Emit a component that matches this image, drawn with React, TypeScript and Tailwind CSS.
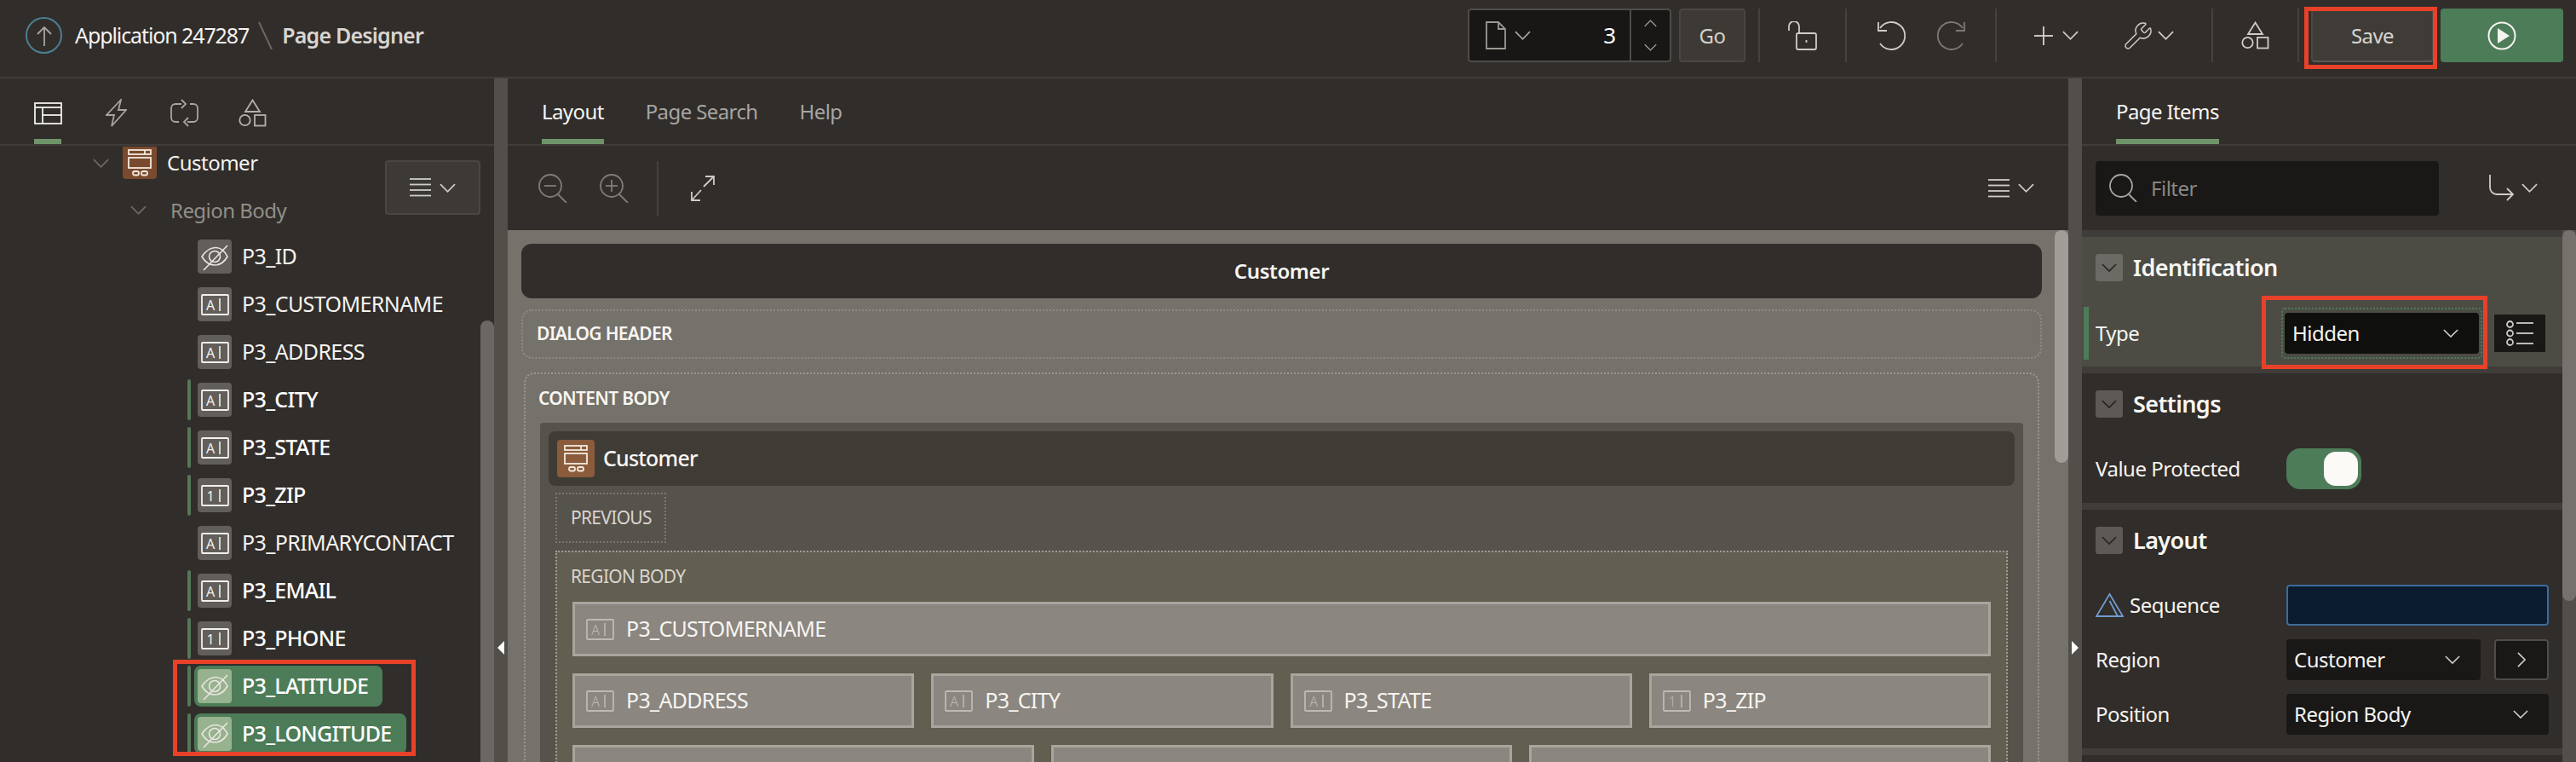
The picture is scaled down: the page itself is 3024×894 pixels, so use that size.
import { Wrench } from "lucide-react";

const font = { fontFamily: '"Noto Sans", "Open Sans", sans-serif' };

function Chev({ w = 19, h = 11, color = "#bdbab5", dir = "down", className = "" }: { w?: number; h?: number; color?: string; dir?: string; className?: string }) {
    const pts = dir === "down" ? "1,1 10,10 19,1" : dir === "up" ? "1,10 10,1 19,10" : "1,1 10,10 1,19";
    const vb = dir === "right" ? "0 0 11 20" : "0 0 20 11";
    return (
        <svg width={w} height={h} viewBox={vb} fill="none" className={className}>
            <polyline points={pts} stroke={color} strokeWidth="1.8" />
        </svg>
    );
}

function Shapes({ color = "#b5b2ad" }: { color?: string }) {
    return (
        <svg width="33" height="33" viewBox="0 0 33 33" fill="none" stroke={color} strokeWidth="1.8">
            <path d="M16.5 1.5 L25 15 H8 Z" />
            <circle cx="7.5" cy="25" r="6.2" />
            <rect x="19" y="19" width="12.5" height="12.5" />
        </svg>
    );
}

function EyeOff() {
    return (
        <svg width="40" height="40" viewBox="0 0 40 40" fill="none" stroke="#e9e6e1" strokeWidth="1.6">
            <path d="M5 20 C11 11 16 9.5 21 9.5 C26 9.5 31 12 35 20 C31 27 26 30 20 30 C14 30 9 27 5 20 Z" />
            <circle cx="20" cy="20" r="6.5" />
            <line x1="7" y1="36" x2="35" y2="7" />
        </svg>
    );
}

function FieldIcon({ ch, w = 33, h = 25, color = "#f2f0ec", thin = false }: { ch: string; w?: number; h?: number; color?: string; thin?: boolean }) {
    return (
        <svg width={w} height={h} viewBox="0 0 33 25" fill="none">
            <rect x="1" y="1" width="31" height="23" rx="1" stroke={color} strokeWidth="1.8" />
            <text x="11" y="18.5" textAnchor="middle" fontSize="16" fill={color} fontFamily="Noto Sans" fontWeight={thin ? 300 : 400}>{ch}</text>
            <line x1="22" y1="5" x2="22" y2="20" stroke={color} strokeWidth="1.6" />
        </svg>
    );
}

function RegionIcon({ size = "big" }: { size?: string }) {
    return (
        <div className={size === "big" ? "w-[40px] h-[38px] bg-[#7a4a2e] rounded-b-[4px] flex items-center justify-center shrink-0" : "w-[44px] h-[44px] bg-[#8a5c3c] rounded-[4px] flex items-center justify-center shrink-0"}>
            <svg width="30" height="32" viewBox="0 0 30 32" fill="none" stroke="#f3e9dd" strokeWidth="1.8">
                <rect x="2" y="1" width="26" height="5" />
                <line x1="21" y1="1" x2="21" y2="6" />
                <rect x="2" y="10" width="26" height="12" />
                <rect x="7" y="26" width="7" height="4.5" rx="2" />
                <rect x="17" y="26" width="7" height="4.5" rx="2" />
            </svg>
        </div>
    );
}

function MenuIcon({ color = "#cfccc7" }: { color?: string }) {
    return (
        <div className="flex items-center gap-[10px]">
            <svg width="25" height="22" viewBox="0 0 25 22" stroke={color} strokeWidth="1.8">
                <line x1="0" y1="1" x2="25" y2="1" />
                <line x1="0" y1="7.5" x2="25" y2="7.5" />
                <line x1="0" y1="14" x2="25" y2="14" />
                <line x1="0" y1="20.5" x2="25" y2="20.5" />
            </svg>
            <Chev color={color} />
        </div>
    );
}

function Divider() {
    return <div className="w-[2px] h-[63px] bg-[#45413e] shrink-0" />;
}

function TreeItem({ name, kind, changed, picked }: { name: string; kind: "eye" | "A" | "1"; changed?: boolean; picked?: boolean }) {
    return (
        <div className="flex items-center h-[56px] pl-[220px] shrink-0">
            <div className={changed ? "w-[4px] h-[48px] rounded-full bg-[#56765b]" : "w-[4px] h-[48px]"} />
            <div className={picked ? "ml-[4px] h-[48px] pl-[4px] pr-[17px] flex items-center bg-[#4d7c58] rounded-[8px]" : "ml-[4px] h-[48px] pl-[4px] flex items-center"}>
                <div className={picked ? "w-[40px] h-[40px] rounded-[4px] bg-[#97b28e] flex items-center justify-center" : "w-[40px] h-[40px] rounded-[4px] bg-[#625e5a] flex items-center justify-center"}>
                    {kind === "eye" ? <EyeOff /> : <FieldIcon ch={kind} />}
                </div>
                <span className={changed ? "ml-[12px] text-[25px] font-medium tracking-[-0.7px] text-white" : "ml-[12px] text-[25px] tracking-[-0.6px] text-[#f5f3ef]"}>{name}</span>
            </div>
        </div>
    );
}

function Tab({ label, active }: { label: string; active?: boolean }) {
    return (
        <div className={active ? "h-full flex items-center border-b-[6px] border-[#6f9469] pt-[6px] text-[#f7f5f1]" : "h-full flex items-center border-b-[6px] border-transparent pt-[6px] text-[#a8a5a0]"}>
            <span className="text-[24px] tracking-[-0.6px]">{label}</span>
        </div>
    );
}

function CanvasItem({ name, kind }: { name: string; kind?: string }) {
    return (
        <div className="h-[64px] bg-[#8b8680] border-[3px] border-[#a8a49e] flex items-center pl-[13px] gap-[14px]">
            {kind && <FieldIcon ch={kind} color="#bdb9b3" thin />}
            {kind && <span className="text-[25px] tracking-[-0.7px] text-[#f7f5f1]">{name}</span>}
        </div>
    );
}

function SectionHead({ title, light }: { title: string; light?: boolean }) {
    return (
        <div className="h-[32px] flex items-center gap-[12px] pl-[16px]">
            <div className={light ? "w-[32px] h-[32px] rounded-[3px] bg-[#6c6a65] flex items-center justify-center" : "w-[32px] h-[32px] rounded-[3px] bg-[#5d5a56] flex items-center justify-center"}>
                <Chev w={18} h={10} color="#26231f" />
            </div>
            <span className="text-[27px] font-semibold tracking-[-0.6px] text-[#f8f6f2]">{title}</span>
        </div>
    );
}

function Band() {
    return <div className="h-[8px] bg-[#403c39] shrink-0" />;
}

function SelectBox({ value, width, bg = "bg-[#191817]" }: { value: string; width: string; bg?: string }) {
    return (
        <div className={`${width} ${bg} h-[48px] rounded-[4px] flex items-center justify-between pl-[9px] pr-[24px]`}>
            <span className="text-[24px] tracking-[-0.5px] text-[#f5f3ef]">{value}</span>
            <Chev w={18} h={10} color="#cfccc7" />
        </div>
    );
}

export default function App() {
    const items: { name: string; kind: "eye" | "A" | "1"; changed?: boolean; picked?: boolean }[] = [
        { name: "P3_ID", kind: "eye" },
        { name: "P3_CUSTOMERNAME", kind: "A" },
        { name: "P3_ADDRESS", kind: "A" },
        { name: "P3_CITY", kind: "A", changed: true },
        { name: "P3_STATE", kind: "A", changed: true },
        { name: "P3_ZIP", kind: "1", changed: true },
        { name: "P3_PRIMARYCONTACT", kind: "A" },
        { name: "P3_EMAIL", kind: "A", changed: true },
        { name: "P3_PHONE", kind: "1", changed: true },
        { name: "P3_LATITUDE", kind: "eye", changed: true, picked: true },
        { name: "P3_LONGITUDE", kind: "eye", changed: true, picked: true },
    ];

    return (
        <div style={font} className="relative w-[3024px] h-[894px] overflow-hidden bg-[#312d2a] flex flex-col">
            {/* top bar */}
            <div className="h-[92px] shrink-0 border-b-2 border-[#403c39] flex items-start pt-[10px]">
                <div className="flex items-center h-[63px] pl-[30px] w-[1723px] shrink-0">
                    <div className="w-[43px] h-[43px] rounded-full border-2 border-[#4b7f90] flex items-center justify-center">
                        <svg width="18" height="24" viewBox="0 0 18 24" fill="none" stroke="#a9a6a1" strokeWidth="1.8">
                            <line x1="9" y1="2" x2="9" y2="24" />
                            <polyline points="1,10 9,2 17,10" />
                        </svg>
                    </div>
                    <span className="ml-[15px] text-[25px] tracking-[-1.1px] text-[#f5f3ef]">Application 247287</span>
                    <svg width="18" height="32" viewBox="0 0 18 32" className="ml-[11px]" stroke="#6b6763" strokeWidth="2">
                        <line x1="1" y1="0" x2="16" y2="32" />
                    </svg>
                    <span className="ml-[10px] text-[25px] font-semibold tracking-[-0.8px] text-[#d8d5d0]">Page Designer</span>
                </div>
                <div className="w-[239px] h-[63px] shrink-0 rounded-[4px] border-2 border-[#4f4b47] bg-[#181716] flex items-center">
                    <div className="flex-1 flex items-center pl-[18px]">
                        <svg width="25" height="33" viewBox="0 0 25 33" fill="none" stroke="#9c9994" strokeWidth="1.8">
                            <path d="M2 1 H16 L24 9 V32 H2 Z" />
                            <path d="M16 1 V9 H24" />
                        </svg>
                        <Chev className="ml-[10px]" color="#a8a5a0" />
                        <span className="ml-auto mr-[16px] text-[26px] text-white">3</span>
                    </div>
                    <div className="w-[47px] h-full border-l-2 border-[#4f4b47] flex flex-col items-center justify-center gap-[19px]">
                        <Chev w={15} h={9} dir="up" color="#a8a5a0" />
                        <Chev w={15} h={9} color="#a8a5a0" />
                    </div>
                </div>
                <div className="ml-[9px] w-[78px] h-[63px] shrink-0 rounded-[4px] border-2 border-[#4a4743] bg-[#3d3a36] flex items-center justify-center text-[24px] tracking-[-0.5px] text-[#d4d1cc]">Go</div>
                <div className="ml-[15px] flex items-center h-[63px]">
                    <Divider />
                    <svg width="34" height="34" viewBox="0 0 34 34" fill="none" stroke="#cfccc7" strokeWidth="1.8" className="ml-[33px]">
                        <path d="M1 11 V6 A6 6 0 0 1 13 6 V14" />
                        <rect x="10" y="14" width="23" height="19" rx="2" />
                        <line x1="21.5" y1="22" x2="21.5" y2="25" />
                    </svg>
                    <div className="ml-[33px]"><Divider /></div>
                    <svg width="34" height="34" viewBox="0 0 34 34" fill="none" stroke="#cfccc7" strokeWidth="1.8" className="ml-[35px]">
                        <path d="M4 8 A16 16 0 1 1 4 26" />
                        <polyline points="2,1 2,11 12,11" />
                    </svg>
                    <svg width="34" height="34" viewBox="0 0 34 34" fill="none" stroke="#7d7a75" strokeWidth="1.8" className="ml-[37px]">
                        <path d="M30 8 A16 16 0 1 0 30 26" />
                        <polyline points="32,1 32,11 22,11" />
                    </svg>
                    <div className="ml-[34px]"><Divider /></div>
                    <svg width="22" height="22" viewBox="0 0 22 22" stroke="#cfccc7" strokeWidth="1.9" className="ml-[44px]">
                        <line x1="11" y1="0" x2="11" y2="22" />
                        <line x1="0" y1="11" x2="22" y2="11" />
                    </svg>
                    <Chev className="ml-[11px]" color="#cfccc7" />
                    <Wrench size={36} strokeWidth={1} color="#cfccc7" className="ml-[52px]" />
                    <Chev className="ml-[5px]" color="#cfccc7" />
                    <div className="ml-[44px]"><Divider /></div>
                    <div className="ml-[33px]"><Shapes color="#cfccc7" /></div>
                    <div className="ml-[33px]"><Divider /></div>
                </div>
                <div className="ml-[14px] w-[144px] h-[62px] mt-[1px] shrink-0 rounded-[4px] bg-[#3f3c37] border-2 border-[#4c4945] border-b-[#5d5a55] flex items-center justify-center text-[24px] tracking-[-0.6px] text-[#d8d5d0]">Save</div>
                <div className="ml-[8px] w-[144px] h-[63px] shrink-0 rounded-[4px] bg-[#4d7c58] flex items-center justify-center">
                    <svg width="34" height="34" viewBox="0 0 34 34" fill="none">
                        <circle cx="17" cy="17" r="15.5" stroke="#f5f3ef" strokeWidth="2" />
                        <path d="M12 8 L26 17 L12 26 Z" fill="#f5f3ef" />
                    </svg>
                </div>
            </div>

            <div className="flex-1 flex min-h-0">
                {/* left panel */}
                <div className="w-[580px] shrink-0 flex flex-col">
                    <div className="h-[79px] shrink-0 border-b-2 border-[#403c39] flex items-start pl-[40px] relative">
                        <svg width="33" height="26" viewBox="0 0 33 26" fill="none" stroke="#f2f0ec" strokeWidth="1.8" className="mt-[28px]">
                            <rect x="1" y="1" width="31" height="24" />
                            <line x1="1" y1="6" x2="32" y2="6" />
                            <line x1="10" y1="6" x2="10" y2="25" />
                            <line x1="10" y1="15" x2="32" y2="15" />
                        </svg>
                        <svg width="25" height="33" viewBox="0 0 25 33" fill="none" stroke="#a8a5a0" strokeWidth="1.8" className="ml-[51px] mt-[24px]">
                            <path d="M18 1 L1 19 H10 L7 32 L24 13 H15 Z" />
                        </svg>
                        <svg width="33" height="33" viewBox="0 0 33 33" fill="none" stroke="#a8a5a0" strokeWidth="1.8" className="ml-[51px] mt-[24px]">
                            <path d="M13 6 H6 A5 5 0 0 0 1 11 V22 A5 5 0 0 0 6 27 H10" />
                            <path d="M20 27 H27 A5 5 0 0 0 32 22 V11 A5 5 0 0 0 27 6 H23" />
                            <polyline points="13,1 18,6 13,11" />
                            <polyline points="21,22 16,27 21,32" />
                        </svg>
                        <div className="ml-[47px] mt-[24px]"><Shapes /></div>
                        <div className="absolute left-[40px] bottom-0 w-[32px] h-[6px] bg-[#6f9469]" />
                    </div>
                    <div className="flex-1 flex min-h-0">
                        <div className="relative flex-1 flex flex-col overflow-hidden">
                            <div className="flex items-center h-[38px] pl-[109px] mt-[1px] shrink-0">
                                <Chev color="#6f6c67" />
                                <div className="ml-[16px]"><RegionIcon /></div>
                                <span className="ml-[12px] text-[24px] tracking-[-0.5px] text-[#f5f3ef]">Customer</span>
                            </div>
                            <div className="flex items-center h-[63px] pt-[10px] pl-[153px] shrink-0">
                                <Chev color="#6f6c67" />
                                <span className="ml-[28px] text-[24px] tracking-[-0.55px] text-[#918e89]">Region Body</span>
                            </div>
                            {items.map(it => <TreeItem key={it.name} {...it} />)}
                            <div className="absolute left-[452px] top-[17px] w-[112px] h-[64px] rounded-[4px] bg-[#3d3a36] border-2 border-[#4a4743] flex items-center justify-center">
                                <MenuIcon />
                            </div>
                        </div>
                        <div className="w-[16px] shrink-0 pt-[205px]">
                            <div className="h-full rounded-t-full bg-[#6b6864]" />
                        </div>
                    </div>
                </div>

                {/* splitter */}
                <div className="w-[16px] shrink-0 bg-[#524e4a] flex items-start justify-center pt-[660px]">
                    <div className="w-0 h-0 border-y-[8px] border-y-transparent border-r-[8px] border-r-white" />
                </div>

                {/* center panel */}
                <div className="w-[1832px] shrink-0 flex flex-col">
                    <div className="h-[79px] shrink-0 border-b-2 border-[#403c39] flex items-center gap-[49px] pl-[40px]">
                        <Tab label="Layout" active />
                        <Tab label="Page Search" />
                        <Tab label="Help" />
                    </div>
                    <div className="h-[99px] shrink-0 flex items-center pl-[36px] pr-[40px]">
                        <svg width="34" height="34" viewBox="0 0 34 34" fill="none" stroke="#807d78" strokeWidth="1.8">
                            <circle cx="14" cy="14" r="13" />
                            <line x1="23" y1="24" x2="33" y2="34" />
                            <line x1="7" y1="14" x2="21" y2="14" />
                        </svg>
                        <svg width="34" height="34" viewBox="0 0 34 34" fill="none" stroke="#807d78" strokeWidth="1.8" className="ml-[38px]">
                            <circle cx="14" cy="14" r="13" />
                            <line x1="23" y1="24" x2="33" y2="34" />
                            <line x1="7" y1="14" x2="21" y2="14" />
                            <line x1="14" y1="7" x2="14" y2="21" />
                        </svg>
                        <div className="ml-[33px] w-[2px] h-[64px] bg-[#45413e]" />
                        <svg width="28" height="30" viewBox="0 0 28 30" fill="none" stroke="#cfccc7" strokeWidth="1.8" className="ml-[38px]">
                            <line x1="27" y1="1" x2="15" y2="13" />
                            <polyline points="17,1 27,1 27,11" />
                            <line x1="1" y1="29" x2="12" y2="17" />
                            <polyline points="1,19 1,29 11,29" />
                        </svg>
                        <div className="ml-auto"><MenuIcon /></div>
                    </div>
                    <div className="flex-1 flex min-h-0 bg-[#75716b] overflow-hidden">
                        <div className="flex-1 min-w-0 pt-[16px] pl-[16px] pr-[15px]">
                            <div className="h-[64px] rounded-[12px] bg-[#312d2a] flex items-center justify-center text-[24px] font-semibold tracking-[-0.4px] text-[#f8f6f2]">Customer</div>
                            <div className="mt-[13px] h-[58px] rounded-[12px] border-2 border-dotted border-[#8f8b86] flex items-center pl-[16px] text-[21px] font-semibold tracking-[-0.7px] text-[#f8f6f2]">DIALOG HEADER</div>
                            <div className="mt-[16px] mx-[3px] rounded-t-[12px] border-2 border-b-0 border-dotted border-[#9a9691]">
                                <div className="h-[57px] flex items-center pl-[15px] text-[21px] font-semibold tracking-[-0.7px] text-[#f8f6f2]">CONTENT BODY</div>
                                <div className="mx-[17px] rounded-t-[4px] bg-[#56524c] pt-[10px] pb-[40px]">
                                    <div className="mx-[10px] h-[64px] rounded-[8px] bg-[#3f3c36] flex items-center pl-[10px] gap-[10px]">
                                        <RegionIcon size="small" />
                                        <span className="text-[25px] font-medium tracking-[-0.8px] text-[#f8f6f2]">Customer</span>
                                    </div>
                                    <div className="mt-[8px] ml-[18px] w-[130px] h-[59px] border-2 border-dotted border-[#7b7771] flex items-center pl-[16px] text-[21px] tracking-[-0.7px] text-[#d8d5d0]">PREVIOUS</div>
                                    <div className="mt-[9px] mx-[18px] border-2 border-b-0 border-dotted border-[#a09c97] bg-[#625e50] px-[18px]">
                                        <div className="h-[58px] -ml-[2px] flex items-center text-[21px] tracking-[-0.7px] text-[#d8d5d0]">REGION BODY</div>
                                        <CanvasItem name="P3_CUSTOMERNAME" kind="A" />
                                        <div className="mt-[20px] grid grid-cols-4 gap-[20px]">
                                            <CanvasItem name="P3_ADDRESS" kind="A" />
                                            <CanvasItem name="P3_CITY" kind="A" />
                                            <CanvasItem name="P3_STATE" kind="A" />
                                            <CanvasItem name="P3_ZIP" kind="1" />
                                        </div>
                                        <div className="mt-[20px] grid grid-cols-3 gap-[20px]">
                                            <CanvasItem name="" />
                                            <CanvasItem name="" />
                                            <CanvasItem name="" />
                                        </div>
                                    </div>
                                </div>
                            </div>
                        </div>
                        <div className="w-[16px] shrink-0">
                            <div className="h-[273px] rounded-full bg-[#a09d98]" />
                        </div>
                    </div>
                </div>

                {/* splitter */}
                <div className="w-[16px] shrink-0 bg-[#524e4a] flex items-start justify-center pt-[660px]">
                    <div className="w-0 h-0 border-y-[8px] border-y-transparent border-l-[8px] border-l-white" />
                </div>

                {/* right panel */}
                <div className="w-[580px] shrink-0 flex flex-col">
                    <div className="h-[79px] shrink-0 border-b-2 border-[#403c39] flex items-center pl-[40px]">
                        <Tab label="Page Items" active />
                    </div>
                    <div className="h-[99px] shrink-0 flex items-center pl-[16px]">
                        <div className="w-[403px] h-[64px] rounded-[4px] bg-[#191817] flex items-center pl-[16px]">
                            <svg width="33" height="33" viewBox="0 0 33 33" fill="none" stroke="#a8a5a0" strokeWidth="1.8">
                                <circle cx="14" cy="14" r="13" />
                                <line x1="23" y1="24" x2="32" y2="33" />
                            </svg>
                            <span className="ml-[16px] text-[24px] tracking-[-0.5px] text-[#8a8783]">Filter</span>
                        </div>
                        <svg width="30" height="31" viewBox="0 0 30 31" fill="none" stroke="#cfccc7" strokeWidth="1.8" className="ml-[59px]">
                            <path d="M1 0 V15 A8 8 0 0 0 9 23 H28" />
                            <polyline points="21,16 28,23 21,30" />
                        </svg>
                        <Chev className="ml-[8px]" color="#cfccc7" />
                    </div>
                    <div className="flex-1 flex min-h-0">
                        <div className="flex-1 min-w-0 flex flex-col">
                            <Band />
                            <div className="h-[152px] shrink-0 bg-[#4c4c45] pt-[20px]">
                                <SectionHead title="Identification" light />
                                <div className="mt-[30px] h-[62px] flex items-center">
                                    <div className="ml-[2px] w-[6px] h-[62px] bg-[#4d7c58]" />
                                    <span className="ml-[8px] w-[218px] text-[24px] tracking-[-0.5px] text-[#f5f3ef]">Type</span>
                                    <div className="border-2 border-dotted border-[#4d7c58] rounded-[4px] px-[2px] py-[4px]">
                                        <SelectBox value="Hidden" width="w-[228px]" bg="bg-[#0f0f0d]" />
                                    </div>
                                    <div className="ml-[14px] w-[60px] h-[44px] bg-[#191817] flex items-center justify-center">
                                        <svg width="33" height="30" viewBox="0 0 33 30" fill="none" stroke="#cfccc7" strokeWidth="1.8">
                                            <circle cx="4.5" cy="4.5" r="3.5" />
                                            <circle cx="4.5" cy="15" r="3.5" />
                                            <circle cx="4.5" cy="25.5" r="3.5" />
                                            <line x1="12" y1="3" x2="32" y2="3" />
                                            <line x1="12" y1="15" x2="32" y2="15" />
                                            <line x1="12" y1="27" x2="32" y2="27" />
                                        </svg>
                                    </div>
                                </div>
                            </div>
                            <Band />
                            <div className="h-[152px] shrink-0 pt-[20px]">
                                <SectionHead title="Settings" />
                                <div className="mt-[36px] flex items-center pl-[16px]">
                                    <span className="w-[224px] text-[24px] tracking-[-0.5px] text-[#f5f3ef]">Value Protected</span>
                                    <div className="w-[88px] h-[48px] rounded-[16px] bg-[#4d7c58] flex items-center justify-end pr-[4px]">
                                        <div className="w-[40px] h-[40px] rounded-[14px] bg-[#fbfaf7]" />
                                    </div>
                                </div>
                            </div>
                            <Band />
                            <div className="h-[280px] shrink-0 pt-[20px]">
                                <SectionHead title="Layout" />
                                <div className="mt-[36px] flex items-center pl-[16px]">
                                    <div className="w-[224px] flex items-center">
                                        <svg width="33" height="30" viewBox="0 0 33 30" fill="none" stroke="#6f9ccf" strokeWidth="1.8">
                                            <path d="M16.5 2 L32 28 H1 Z" />
                                            <line x1="16.5" y1="10" x2="26" y2="28" />
                                        </svg>
                                        <span className="ml-[7px] text-[24px] tracking-[-0.5px] text-[#f5f3ef]">Sequence</span>
                                    </div>
                                    <div className="w-[308px] h-[48px] rounded-[4px] bg-[#0a1c2e] border-2 border-[#3e6a9a]" />
                                </div>
                                <div className="mt-[16px] flex items-center pl-[16px]">
                                    <span className="w-[224px] text-[24px] tracking-[-0.5px] text-[#f5f3ef]">Region</span>
                                    <SelectBox value="Customer" width="w-[228px]" />
                                    <div className="ml-[16px] w-[64px] h-[48px] rounded-[4px] bg-[#191817] border-2 border-[#4f4c48] flex items-center justify-center">
                                        <Chev w={10} h={20} dir="right" color="#cfccc7" />
                                    </div>
                                </div>
                                <div className="mt-[16px] flex items-center pl-[16px]">
                                    <span className="w-[224px] text-[24px] tracking-[-0.5px] text-[#f5f3ef]">Position</span>
                                    <SelectBox value="Region Body" width="w-[308px]" />
                                </div>
                            </div>
                            <Band />
                        </div>
                        <div className="w-[16px] shrink-0 bg-[#524e4a]">
                            <div className="h-[435px] rounded-full bg-[#75716c]" />
                        </div>
                    </div>
                </div>
            </div>

            {/* red annotation boxes */}
            <div className="absolute left-[2705px] top-[8px] w-[156px] h-[73px] border-[5px] border-[#e8412a]" />
            <div className="absolute left-[2655px] top-[347px] w-[265px] h-[86px] border-[5px] border-[#e8412a]" />
            <div className="absolute left-[203px] top-[774px] w-[285px] h-[113px] border-[5px] border-[#e8412a]" />
        </div>
    );
}
